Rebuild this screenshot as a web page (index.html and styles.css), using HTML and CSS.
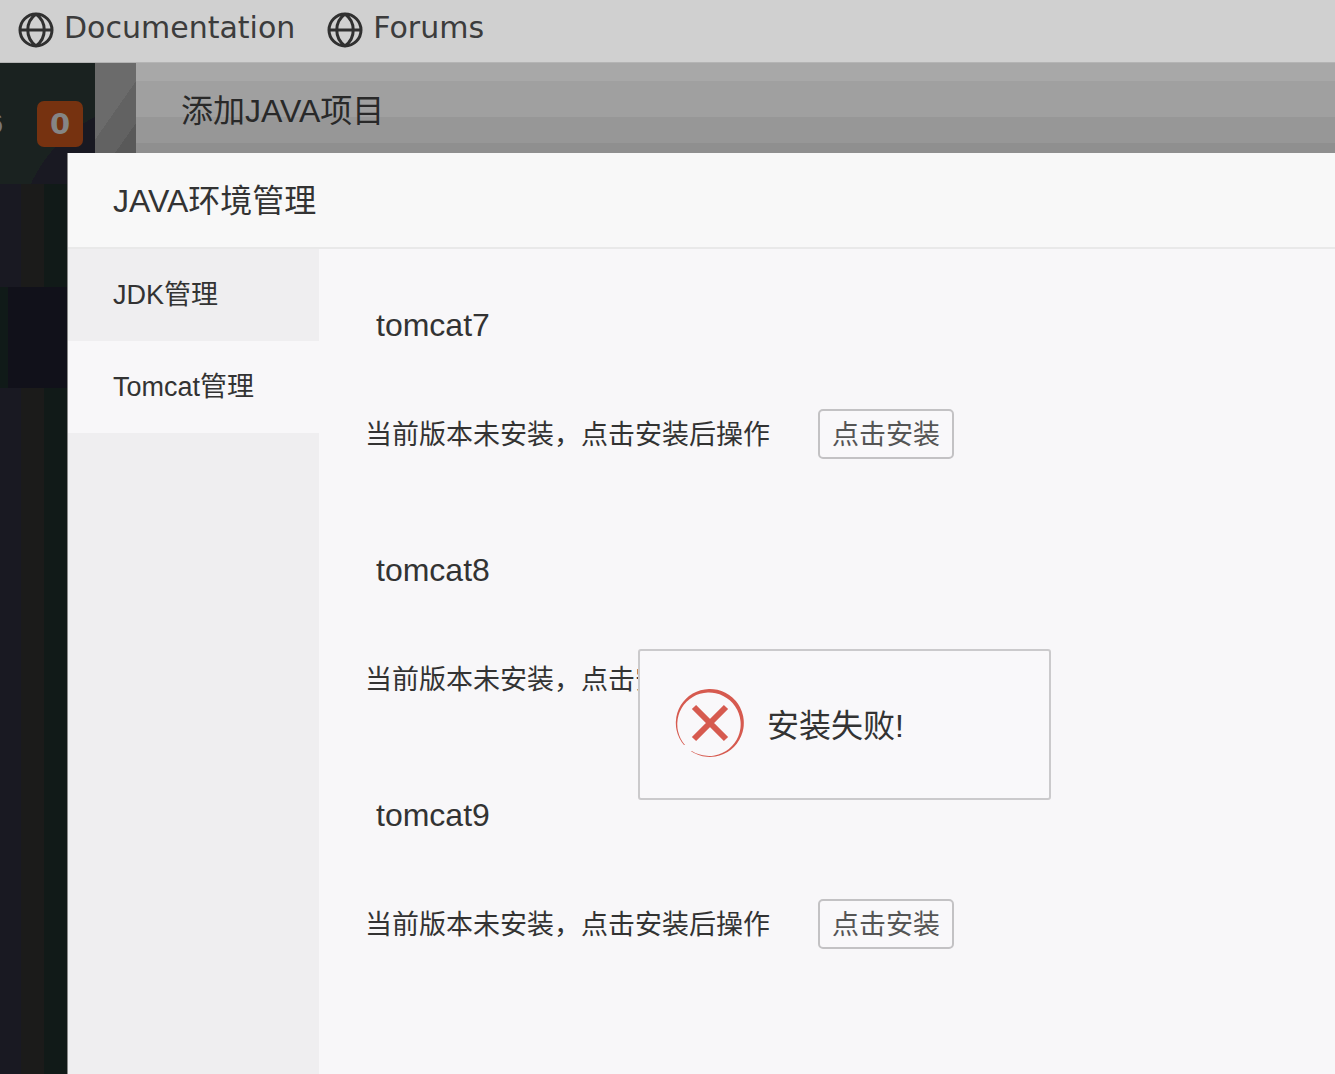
FILE: index.html
```
<!DOCTYPE html>
<html lang="zh-CN">
<head>
  <meta charset="UTF-8" />
  <title>JAVA环境管理</title>
  <meta name="viewport" content="width=device-width, initial-scale=1.0" />
  <link rel="stylesheet" href="styles.css">
</head>
<body>
  <!-- Bookmarks bar -->
  <nav class="bookmarks">
    <a href="#">
      <svg class="globe" viewBox="0 0 36 36" aria-hidden="true">
        <circle cx="18" cy="18" r="16" />
        <path d="M18 2C7 10 7 26 18 34M18 2C29 10 29 26 18 34M2 18h32" />
      </svg>
      Documentation
    </a>
    <a href="#">
      <svg class="globe" viewBox="0 0 36 36" aria-hidden="true">
        <circle cx="18" cy="18" r="16" />
        <path d="M18 2C7 10 7 26 18 34M18 2C29 10 29 26 18 34M2 18h32" />
      </svg>
      Forums
    </a>
  </nav>

  <div class="page">
    <aside class="menu">
      <div class="menu-top">
        <span class="server">6</span>
        <span class="badge">0</span>
      </div>
      <div class="menu-list">
        <div class="menu-active"></div>
      </div>
    </aside>
    <div class="gutter"></div>
    <main class="project">
      <h2>添加JAVA项目</h2>
    </main>

    <!-- Java environment dialog -->
    <section class="dialog">
      <h2 class="dialog-title">JAVA环境管理</h2>
      <div class="dialog-body">
        <div class="tabs">
          <button class="tab">JDK管理</button>
          <button class="tab active">Tomcat管理</button>
        </div>
        <div class="versions">
          <div class="version">
            <h3>tomcat7</h3>
            <div class="version-row">
              <span>当前版本未安装，点击安装后操作</span>
              <button class="install-btn">点击安装</button>
            </div>
          </div>
          <div class="version">
            <h3>tomcat8</h3>
            <div class="version-row">
              <span>当前版本未安装，点击安装后操作</span>
              <button class="install-btn">点击安装</button>
            </div>
          </div>
          <div class="version">
            <h3>tomcat9</h3>
            <div class="version-row">
              <span>当前版本未安装，点击安装后操作</span>
              <button class="install-btn">点击安装</button>
            </div>
          </div>
        </div>
      </div>
    </section>
  </div>

  <!-- Error message -->
  <div class="message" role="alert">
    <svg class="error-icon" viewBox="0 0 70 70" aria-hidden="true">
      <path class="ring" d="M9 57A34 34 0 1 1 16 63.2L16.8 62.9A31.7 31.7 0 1 0 10 57Z" />
      <path class="cross" d="M19 19L51 51M51 19L19 51" />
    </svg>
    <span>安装失败!</span>
  </div>
</body>
</html>
```

FILE: styles.css
```
* {
  margin: 0;
  padding: 0;
  box-sizing: border-box;
}

html, body {
  height: 100%;
}

body {
  display: flex;
  flex-direction: column;
  overflow: hidden;
  background-color: #f8f7f9;
  color: #333;
  font-family: "Liberation Sans", "Noto Sans CJK SC", sans-serif;
  font-size: 32px;
}

button {
  font-family: inherit;
  cursor: pointer;
}

h2, h3 {
  font-size: 32px;
  font-weight: normal;
}

/* Bookmarks bar */
.bookmarks {
  display: flex;
  gap: 32px;
  height: 63px;
  padding: 10px 18px;
  background-color: #d0d0d0;
  border-bottom: 1px solid #b4b4b4;
}

.bookmarks a {
  display: flex;
  gap: 10px;
  color: #3c3c3c;
  font-family: "DejaVu Sans", sans-serif;
  font-size: 30px;
  line-height: 36px;
  text-decoration: none;
}

.globe {
  width: 36px;
  height: 36px;
  margin-top: 2px;
  fill: none;
  stroke: #303030;
  stroke-width: 3;
}

.page {
  position: relative;
  display: flex;
  flex: 1;
}

/* Dimmed page behind the dialog */
.menu {
  display: flex;
  flex-direction: column;
  width: 95px;
  background: linear-gradient(90deg, #191922 0 21px, #1b1b1a 21px 44px, #111a18 44px);
}

.menu-top {
  display: flex;
  justify-content: flex-end;
  align-items: center;
  gap: 34px;
  height: 121px;
  padding-right: 12px;
  background: radial-gradient(circle at 160px 180px, #191922 0 142px, #1a2220 142px);
}

.server {
  color: #777;
  font-size: 28px;
}

.badge {
  flex-shrink: 0;
  width: 46px;
  border-radius: 7px;
  background-color: #763210;
  color: #858585;
  font-family: "DejaVu Sans", sans-serif;
  font-size: 29px;
  font-weight: bold;
  line-height: 46px;
  text-align: center;
}

.menu-list {
  padding-top: 103px;
}

.menu-active {
  height: 101px;
  border-left: 8px solid #101a18;
  background-color: #11111a;
}

.gutter {
  width: 41px;
  background: linear-gradient(125deg, #6b6b6b 0 44px, #626262 44px 68px, #595959 68px);
}

.project {
  flex: 1;
  padding: 24px 45px;
  background: linear-gradient(#a8a8a8 0 18px, #a0a0a0 18px 54px, #979797 54px 80px, #8f8f8f 80px);
}

.project h2 {
  color: #292929;
  line-height: 48px;
}

/* Dialog */
.dialog {
  position: absolute;
  top: 90px;
  right: 0;
  bottom: 0;
  left: 67px;
  display: flex;
  flex-direction: column;
  border-left: 1px solid #888;
  background-color: #f8f7f9;
}

.dialog-title {
  height: 96px;
  padding-left: 45px;
  border-bottom: 2px solid #e9e9e9;
  background-color: #f8f8f8;
  line-height: 96px;
}

.dialog-body {
  display: flex;
  flex: 1;
}

.tabs {
  width: 251px;
  background-color: #efeef0;
}

.tab {
  display: block;
  width: 100%;
  height: 92px;
  padding: 0 45px 6px;
  border: none;
  background: none;
  color: #333;
  font-size: 27px;
  text-align: left;
}

.tab.active {
  background-color: #f8f7f9;
}

.versions {
  flex: 1;
  padding: 52px 46px;
}

.version {
  height: 245px;
}

.version h3 {
  padding-left: 11px;
  line-height: 48px;
}

.version-row {
  display: flex;
  align-items: center;
  gap: 48px;
  margin-top: 60px;
  font-size: 27px;
}

.version-row span {
  padding-bottom: 4px;
}

.install-btn {
  height: 50px;
  padding: 0 12px 4px;
  border: 2px solid #c3c2c4;
  border-radius: 5px;
  background-color: #f9f8fa;
  color: #555;
  font-size: 27px;
}

/* Error message */
.message {
  position: absolute;
  top: 649px;
  left: 638px;
  display: flex;
  align-items: center;
  gap: 22px;
  width: 413px;
  height: 151px;
  padding: 0 35px 4px;
  border: 2px solid #cbcacc;
  border-radius: 3px;
  background-color: #f9f8fa;
}

.error-icon {
  width: 70px;
  height: 70px;
}

.ring {
  fill: #d65a4f;
}

.cross {
  stroke: #d65a4f;
  stroke-width: 6;
}
```
